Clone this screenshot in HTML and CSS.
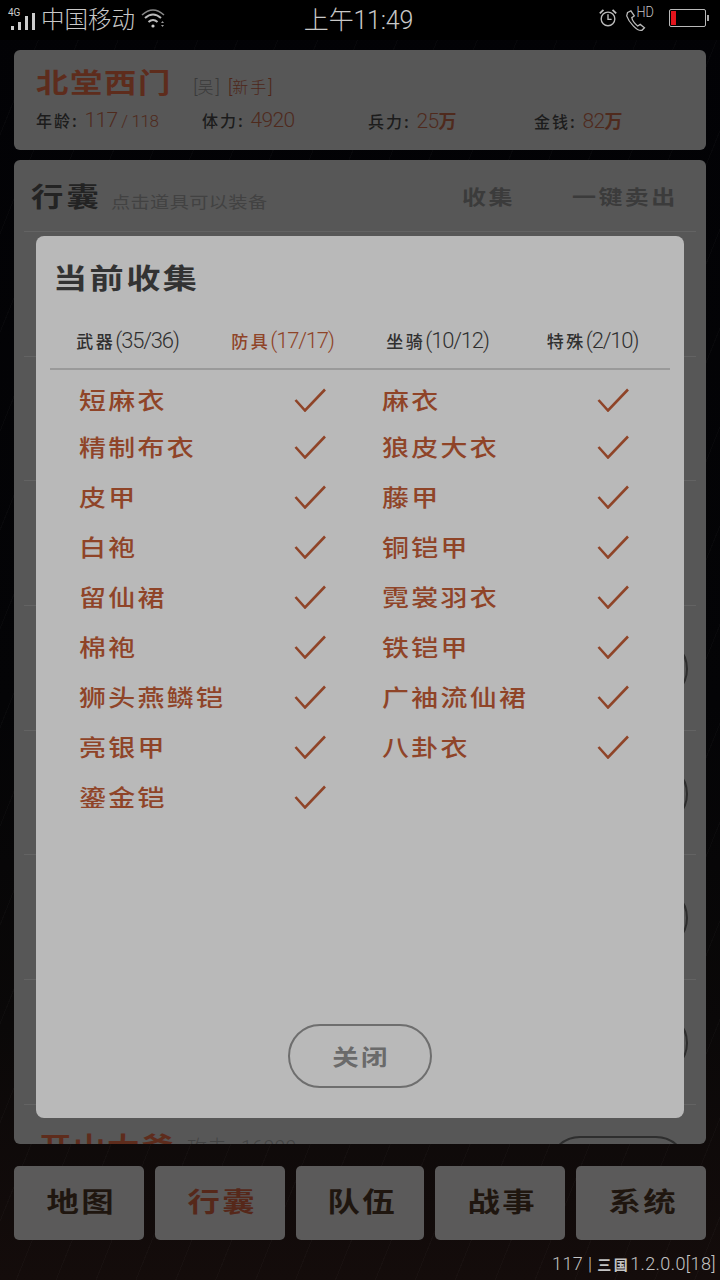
FILE: index.html
```html
<!DOCTYPE html>
<html lang="zh-CN">
<head>
    <meta charset="UTF-8">
    <meta name="viewport" content="width=device-width, initial-scale=1.0">
    <title>行囊</title>
    <link rel="stylesheet" href="styles.css">
</head>
<body>
  <div class="screen">

    <!-- Status bar -->
    <div class="status">
      <div class="status-left">
        <svg class="signal" width="30" height="26" viewBox="0 0 30 26">
          <text x="0" y="11" class="net">4G</text>
          <rect x="3" y="21" width="3" height="4" fill="#ccc"/>
          <rect x="10" y="17" width="3" height="8" fill="#ccc"/>
          <rect x="17" y="11" width="3" height="14" fill="#ccc"/>
          <rect x="24" y="8" width="3" height="17" fill="#ccc"/>
        </svg>
        <span class="carrier">中国移动</span>
        <svg class="wifi" width="26" height="22" viewBox="0 0 26 22" fill="none" stroke="#bbb">
          <path d="M2 8Q13-2 24 8" stroke-width="1.5" stroke="#888"/>
          <path d="M5 11Q13 4 21 11" stroke-width="2"/>
          <path d="M8.500 15Q13 11 17.500 15" stroke-width="2"/>
          <circle cx="13" cy="19" r="1.600" fill="#ccc" stroke="none"/>
          <path d="M21 16l1.500-2 1.500 2zM21 18l1.500 2 1.500-2z" fill="#999" stroke="none"/>
        </svg>
      </div>
      <div class="clock">上午11:49</div>
      <div class="status-right">
        <svg width="20" height="22" viewBox="0 0 22 24" fill="none" stroke="#bbb" stroke-width="1.500">
          <circle cx="11" cy="13" r="7.500"/>
          <path d="M11 8v5.500h4"/>
          <path d="M2 7l4-4M20 7l-4-4" stroke-width="2"/>
        </svg>
        <div class="call">
          <svg class="phone" width="22" height="22" viewBox="0 0 26 26" fill="none" stroke="#bbb" stroke-width="1.500">
            <path d="M3 3l4-2 4 6-3 2q1 5 7 10l3-2 5 4-3 3q-4 1-10-5T2 7z"/>
          </svg>
          <span class="hd">HD</span>
        </div>
        <div class="battery"><div class="battery-level"></div></div>
        <div class="battery-tip"></div>
      </div>
    </div>

    <!-- Player card -->
    <div class="card player">
      <div class="player-top">
        <span class="player-name wide">北堂西门</span>
        <span class="tag">[<i>吴</i>]</span>
        <span class="tag tag-red">[<i>新手</i>]</span>
      </div>
      <div class="stats">
        <div class="stat"><span class="label">年龄</span>: <b>117</b><em> / 118</em></div>
        <div class="stat"><span class="label">体力</span>: <b>4920</b></div>
        <div class="stat"><span class="label">兵力</span>: <b>25<u>万</u></b></div>
        <div class="stat"><span class="label">金钱</span>: <b>82<u>万</u></b></div>
      </div>
    </div>

    <!-- Bag card, mostly hidden by the dialog -->
    <div class="card bag">
      <div class="bag-head">
        <span class="bag-title wide">行囊</span>
        <span class="bag-hint wide">点击道具可以装备</span>
        <span class="bag-link wide link-collect">收集</span>
        <span class="bag-link wide">一键卖出</span>
      </div>
      <div class="bag-row"></div>
      <div class="bag-row"></div>
      <div class="bag-row"></div>
      <div class="bag-row"><div class="round-btn"></div></div>
      <div class="bag-row"><div class="round-btn"></div></div>
      <div class="bag-row"><div class="round-btn"></div></div>
      <div class="bag-row"><div class="round-btn"></div></div>
      <div class="bag-row bag-last">
        <span class="item-name wide">开山大斧</span>
        <span class="item-note">攻击 : 16000</span>
        <div class="round-btn"></div>
      </div>
    </div>

    <!-- Bottom nav -->
    <div class="nav">
      <div class="nav-btn nav-w1"><span class="wide-c">地图</span></div>
      <div class="nav-btn nav-w2 active"><span class="wide-c">行囊</span></div>
      <div class="nav-btn nav-w3"><span class="wide-c">队伍</span></div>
      <div class="nav-btn nav-w1"><span class="wide-c">战事</span></div>
      <div class="nav-btn nav-w1"><span class="wide-c">系统</span></div>
    </div>
    <div class="version">117 | <span class="cn">三国</span>1.2.0.0[18]</div>

    <!-- Collection dialog -->
    <div class="dialog">
      <h2 class="dialog-title"><span class="wide">当前收集</span></h2>
      <div class="tabs">
        <div class="tab"><span class="cn">武器</span>(35/36)</div>
        <div class="tab active"><span class="cn">防具</span>(17/17)</div>
        <div class="tab"><span class="cn">坐骑</span>(10/12)</div>
        <div class="tab"><span class="cn">特殊</span>(2/10)</div>
      </div>
      <div class="items" id="items"></div>
      <div class="dialog-foot"><button class="close-btn"><span class="wide-c">关闭</span></button></div>
    </div>
  </div>

  <script>
    var names = ['短麻衣', '麻衣', '精制布衣', '狼皮大衣', '皮甲', '藤甲', '白袍', '铜铠甲', '留仙裙', '霓裳羽衣',
      '棉袍', '铁铠甲', '狮头燕鳞铠', '广袖流仙裙', '亮银甲', '八卦衣', '鎏金铠'];
    var list = document.getElementById('items');
    for (var i = 0; i < names.length; i++) {
      var item = document.createElement('div');
      item.className = 'item';
      item.innerHTML = '<span class="wide">' + names[i] + '</span>' +
        '<svg width="32" height="24" viewBox="0 0 32 24" fill="none" stroke="#8f4428" stroke-width="2.600">' +
        '<path d="M1.500 12L11 22.500L31 1.500"/></svg>';
      list.appendChild(item);
    }
  </script>
</body>
</html>
```

FILE: styles.css
```css
* {
    box-sizing: border-box;
}

html, body {
    margin: 0;
    padding: 0;
}

body {
    font-family: "Noto Sans CJK SC", "Noto Sans", sans-serif;
    color: #222;
}

.screen {
    position: relative;
    width: 720px;
    height: 1280px;
    overflow: hidden;
    background:
        repeating-linear-gradient(112deg, rgba(255, 255, 255, 0) 0 13px, rgba(255, 255, 255, .018) 13px 14px, rgba(255, 255, 255, 0) 14px 37px),
        linear-gradient(180deg, #020205 0%, #040406 55%, #0a0808 80%, #140c0b 100%);
}

/* the reference's square, wide letterforms */
.wide {
    display: inline-block;
    transform: scaleX(1.2);
    transform-origin: left center;
    white-space: nowrap;
}

.wide-c {
    display: inline-block;
    transform: scaleX(1.2);
    transform-origin: center;
    white-space: nowrap;
}

/* status bar */
.status {
    display: flex;
    align-items: center;
    justify-content: space-between;
    height: 40px;
    padding: 0 11px 4px 8px;
    background: #000;
    color: #c8c8c8;
}

.status-left, .status-right {
    display: flex;
    align-items: center;
    width: 200px;
}

.status-right {
    justify-content: flex-end;
}

.net {
    font-family: "Roboto", sans-serif;
    font-size: 10px;
    fill: #ccc;
}

.signal {
    margin-right: 3px;
}

.carrier {
    font-size: 23.500px;
    font-weight: 300;
    line-height: 40px;
}

.wifi {
    margin-left: 5px;
}

.clock {
    font-family: "Roboto", "Noto Sans CJK SC", sans-serif;
    font-size: 25px;
    font-weight: 300;
    letter-spacing: -.2px;
}

.call {
    position: relative;
    width: 32px;
    height: 28px;
    margin: 0 12px 0 7px;
}

.phone {
    position: absolute;
    top: 6px;
    left: 0;
}

.hd {
    position: absolute;
    top: -1px;
    left: 10px;
    font-family: "Roboto", sans-serif;
    font-size: 15px;
    font-weight: 300;
    transform: scaleX(.85);
}

.battery {
    width: 37px;
    height: 18px;
    padding: 1px;
    border: 1px solid #b9b9b9;
    border-radius: 2px;
}

.battery-level {
    width: 5px;
    height: 14px;
    background: #e3141c;
}

.battery-tip {
    width: 2px;
    height: 6px;
    margin-left: 1px;
    background: #aaa;
}

/* cards */
.card {
    margin: 10px 14px 0;
    border-radius: 6px;
    background: #575757;
    overflow: hidden;
}

.player {
    height: 100px;
    padding: 12px 0 0 22px;
}

.player-top {
    display: flex;
    align-items: baseline;
    height: 40px;
}

.player-name {
    margin-right: 44px;
    font-size: 27px;
    font-weight: 700;
    letter-spacing: 1.300px;
    color: #5e2c1c;
}

.tag {
    margin-right: 8px;
    font-family: "Roboto", sans-serif;
    font-size: 18px;
    font-weight: 300;
    color: #3a3a3a;
}

.tag i {
    font-family: "Noto Sans CJK SC", sans-serif;
    font-size: 16px;
    font-style: normal;
    letter-spacing: 2px;
}

.tag-red {
    color: #4e2619;
}

.stats {
    display: flex;
    margin-top: 4px;
}

.stat {
    flex: none;
    width: 166px;
    font-size: 16px;
    font-weight: 500;
    color: #1c1c1c;
    line-height: 28px;
    white-space: nowrap;
}

.label {
    letter-spacing: 2px;
}

.stat b {
    margin-left: 4px;
    font-family: "Roboto", sans-serif;
    font-size: 21px;
    font-weight: 300;
    letter-spacing: -.6px;
    color: #4f2a1d;
}

.stat em {
    font-family: "Roboto", sans-serif;
    font-size: 17px;
    font-style: normal;
    font-weight: 300;
    letter-spacing: -.4px;
    color: #4f2a1d;
}

.stat u {
    font-family: "Noto Sans CJK SC", sans-serif;
    font-size: 18px;
    font-weight: 700;
    text-decoration: none;
}

.bag {
    height: 984px;
    padding: 0 10px;
}

.bag-head {
    display: flex;
    align-items: flex-start;
    height: 72px;
    padding: 18px 36px 0 7px;
    border-bottom: 1px solid #636363;
}

.bag-title {
    margin-right: 21px;
    font-size: 27px;
    font-weight: 700;
    letter-spacing: 2.500px;
    line-height: 36px;
    color: #232323;
}

.bag-hint {
    margin-top: 13px;
    font-size: 16px;
    letter-spacing: .3px;
    line-height: 20px;
    color: #424242;
}

.bag-link {
    margin-top: 6px;
    font-size: 20px;
    font-weight: 700;
    letter-spacing: 2px;
    line-height: 26px;
    color: #3b3b3b;
}

.link-collect {
    margin-left: auto;
    margin-right: 66px;
}

.bag-row {
    position: relative;
    height: 124.700px;
    border-bottom: 1px solid #636363;
}

.round-btn {
    position: absolute;
    top: 31px;
    right: 8px;
    width: 140px;
    height: 64px;
    border: 2px solid #2e2e2e;
    border-radius: 32px;
}

.bag-last {
    border: 0;
}

.item-name {
    position: absolute;
    top: 21px;
    left: 15px;
    font-size: 27px;
    font-weight: 700;
    letter-spacing: 1.300px;
    color: #5e2c1c;
}

.item-note {
    position: absolute;
    top: 27px;
    left: 163px;
    font-family: "Roboto", "Noto Sans CJK SC", sans-serif;
    font-size: 20px;
    font-weight: 300;
    color: #444;
}

/* bottom nav */
.nav {
    display: flex;
    justify-content: space-between;
    margin: 22px 14px 0;
}

.nav-btn {
    height: 74px;
    padding-bottom: 5px;
    border-radius: 5px;
    background: #5b5a5a;
    font-size: 27px;
    font-weight: 700;
    letter-spacing: 2px;
    text-indent: 2px;
    line-height: 69px;
    text-align: center;
    color: #1f160f;
}

.nav-w1, .nav-w2 {
    width: 130px;
}

.nav-w3 {
    width: 128px;
}

.nav-btn.active {
    color: #56281a;
}

.version {
    position: absolute;
    right: 4px;
    bottom: 6px;
    font-family: "Roboto", sans-serif;
    font-size: 18px;
    font-weight: 300;
    letter-spacing: .4px;
    color: #c4c4c4;
}

.version .cn {
    font-family: "Noto Sans CJK SC", sans-serif;
    font-size: 14px;
    font-weight: 700;
    letter-spacing: 2.500px;
}

/* dialog */
.dialog {
    position: absolute;
    top: 236px;
    left: 36px;
    display: flex;
    flex-direction: column;
    width: 648px;
    height: 882px;
    padding: 0 14px;
    border-radius: 8px;
    background: #b9b9b9;
}

.dialog-title {
    margin: 21px 0 0 3px;
    font-size: 28px;
    font-weight: 700;
    letter-spacing: 2px;
    line-height: 40px;
    color: #333;
}

.dialog-title .wide {
    transform: scaleX(1.220);
}

.tabs {
    display: flex;
    height: 51px;
    margin-top: 22px;
    border-bottom: 2px solid #9a9a9a;
}

.tab {
    flex: 1;
    font-family: "Roboto", "Noto Sans CJK SC", sans-serif;
    font-size: 22px;
    font-weight: 300;
    letter-spacing: -1.200px;
    line-height: 44px;
    text-align: center;
    color: #303030;
}

.tab .cn {
    font-family: "Noto Sans CJK SC", sans-serif;
    font-size: 17px;
    font-weight: 500;
    letter-spacing: 2.500px;
}

.tab.active {
    color: #8f4428;
}

.items {
    display: grid;
    grid-template-columns: 247px 247px;
    grid-template-rows: 47px;
    grid-auto-rows: 50px;
    column-gap: 56px;
    margin-top: 7px;
    padding-left: 29px;
}

.item {
    display: flex;
    align-items: center;
    justify-content: space-between;
    height: 46px;
    font-size: 23px;
    font-weight: 500;
    letter-spacing: 2px;
    color: #8f4428;
}

.item .wide {
    margin-bottom: 3px;
    transform: scaleX(1.170);
}

.dialog-foot {
    display: flex;
    justify-content: center;
    margin-top: auto;
    padding-bottom: 30px;
}

.close-btn {
    width: 144px;
    height: 64px;
    padding: 0 0 2px 2px;
    border: 2px solid #6e6e6e;
    border-radius: 32px;
    background: none;
    font-family: inherit;
    font-size: 22px;
    font-weight: 700;
    letter-spacing: 2px;
    color: #6a6a6a;
}
```
